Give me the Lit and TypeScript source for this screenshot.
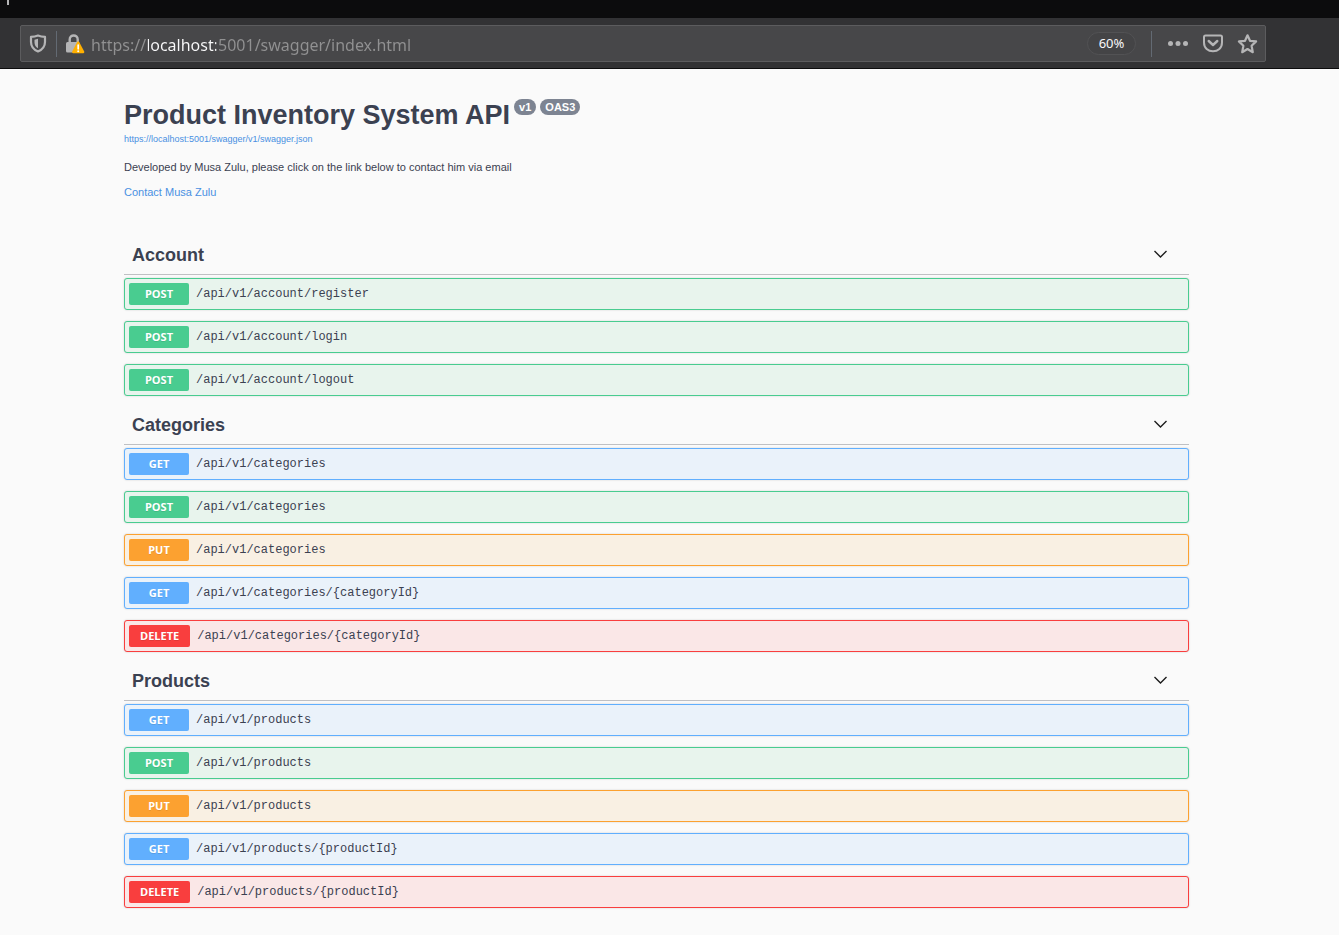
import { LitElement, html, css } from "lit";
import { customElement, property } from "lit/decorators.js";

type Method = "GET" | "POST" | "PUT" | "DELETE";

interface Operation {
  method: Method;
  path: string;
}

interface Tag {
  name: string;
  operations: Operation[];
}

const TAGS: Tag[] = [
  {
    name: "Account",
    operations: [
      { method: "POST", path: "/api/v1/account/register" },
      { method: "POST", path: "/api/v1/account/login" },
      { method: "POST", path: "/api/v1/account/logout" },
    ],
  },
  {
    name: "Categories",
    operations: [
      { method: "GET", path: "/api/v1/categories" },
      { method: "POST", path: "/api/v1/categories" },
      { method: "PUT", path: "/api/v1/categories" },
      { method: "GET", path: "/api/v1/categories/{categoryId}" },
      { method: "DELETE", path: "/api/v1/categories/{categoryId}" },
    ],
  },
  {
    name: "Products",
    operations: [
      { method: "GET", path: "/api/v1/products" },
      { method: "POST", path: "/api/v1/products" },
      { method: "PUT", path: "/api/v1/products" },
      { method: "GET", path: "/api/v1/products/{productId}" },
      { method: "DELETE", path: "/api/v1/products/{productId}" },
    ],
  },
];

@customElement("browser-bar")
export class BrowserBar extends LitElement {
  static styles = css`
    :host {
      display: block;
      font-family: "Noto Sans", "Open Sans", sans-serif;
    }
    .tabs {
      height: 18px;
      background: #0c0c0d;
    }
    .tab-edge {
      width: 2px;
      height: 5px;
      margin-left: 7px;
      background: #b5b5b6;
    }
    .toolbar {
      padding: 7px 73px 6px 20px;
      background: #323234;
      border-bottom: 1px solid #0c0c0d;
    }
    .field {
      display: flex;
      align-items: center;
      box-sizing: border-box;
      height: 37px;
      padding: 0 7px;
      background: #474749;
      border: 1px solid #5c5c5e;
      border-radius: 2px;
    }
    button {
      display: flex;
      flex: none;
      padding: 0;
      border: 0;
      background: none;
      color: #b5b5b6;
      font: inherit;
    }
    svg {
      display: block;
    }
    .line {
      flex: none;
      width: 1px;
      height: 26px;
      background: #636a73;
    }
    .shield {
      margin-right: 8px;
    }
    .lock {
      margin-left: 8px;
    }
    .address {
      flex: 1;
      min-width: 0;
      margin: 0 16px 0 6px;
      padding: 2px 0 0;
      border: 0;
      outline: 0;
      font: inherit;
      font-size: 16px;
      line-height: 24px;
      color: #919192;
      -webkit-text-fill-color: transparent;
      background: linear-gradient(
        90deg,
        #919192 57px,
        #f9f9fa 57px,
        #f9f9fa 125px,
        #919192 125px
      );
      -webkit-background-clip: text;
      background-clip: text;
    }
    .zoom {
      justify-content: center;
      box-sizing: border-box;
      width: 49px;
      margin-right: 15px;
      border: 1px solid #525254;
      border-radius: 12px;
      background: #444446;
      color: #f9f9fa;
      font-size: 13px;
      line-height: 21px;
    }
    .actions {
      display: flex;
      gap: 14px;
      margin-left: 15px;
    }
  `;

  render() {
    return html`
      <div class="tabs"><div class="tab-edge"></div></div>
      <div class="toolbar">
        <div class="field">
          <button class="shield" aria-label="Tracking protection">
            <svg width="20" height="20" viewBox="0 0 20 20" fill="none">
              <path
                d="M10 1.500 C8 2.300 5.600 2.800 3 2.900 V8 C3 12.600 5.600 15.600 10 17.500 C14.400 15.600 17 12.600 17 8 V2.900 C14.400 2.800 12 2.300 10 1.500Z"
                stroke="currentColor"
                stroke-width="2.200"
                stroke-linejoin="round"
              />
              <path d="M10 4.800 L6.500 5.800 V8.500 C6.500 11.200 7.800 13 10 14.300Z" fill="currentColor" />
            </svg>
          </button>
          <span class="line"></span>
          <button class="lock" aria-label="Connection is not secure">
            <svg width="20" height="20" viewBox="0 0 20 20" fill="none">
              <path
                d="M4.700 9 V5.500 C4.700 0.200 12.700 0.200 12.700 5.500 V9"
                stroke="currentColor"
                stroke-width="2.400"
              />
              <rect x="1" y="8" width="13.500" height="10.500" rx="1.500" fill="currentColor" />
              <path
                d="M12.200 8 Q13.200 6.500 14.200 8 L19.200 17.500 Q19.700 19.300 18.300 19.300 H8.100 Q6.700 19.300 7.200 17.500Z"
                fill="#ffb000"
              />
              <path d="M13.200 11 V14.800" stroke="#fff" stroke-width="1.700" stroke-linecap="round" />
              <circle cx="13.200" cy="17.200" r="1" fill="#fff" />
            </svg>
          </button>
          <input
            class="address"
            type="text"
            aria-label="Address"
            spellcheck="false"
            .value=${"https://localhost:5001/swagger/index.html"}
          />
          <button class="zoom" aria-label="Zoom level">60%</button>
          <span class="line"></span>
          <div class="actions">
            <button aria-label="Page actions">
              <svg width="22" height="22" viewBox="0 0 22 22" fill="currentColor">
                <circle cx="3.500" cy="10.500" r="2.500" />
                <circle cx="11" cy="10.500" r="2.500" />
                <circle cx="18.500" cy="10.500" r="2.500" />
              </svg>
            </button>
            <button aria-label="Save to Pocket">
              <svg width="20" height="22" viewBox="0 0 20 22" fill="none" stroke="currentColor">
                <path
                  d="M2.500 2.500 H17.500 Q19 2.500 19 4 V9.500 C19 15 15 18.300 10 18.300 C5 18.300 1 15 1 9.500 V4 Q1 2.500 2.500 2.500Z"
                  stroke-width="2"
                />
                <path
                  d="M5.700 8 L10 12 L14.300 8"
                  stroke-width="2.400"
                  stroke-linecap="round"
                  stroke-linejoin="round"
                />
              </svg>
            </button>
            <button aria-label="Bookmark this page">
              <svg width="21" height="22" viewBox="0 0 21 22" fill="none" stroke="currentColor">
                <path
                  d="M10.500 2.300 L13 7.800 L19.100 8.400 L14.600 12.700 L15.800 19.200 L10.500 16 L5.200 19.200 L6.400 12.700 L1.900 8.400 L8 7.800Z"
                  stroke-width="2.200"
                  stroke-linejoin="round"
                />
              </svg>
            </button>
          </div>
        </div>
      </div>
    `;
  }
}

@customElement("operation-row")
export class OperationRow extends LitElement {
  static styles = css`
    :host {
      display: block;
    }
    .row {
      display: flex;
      align-items: center;
      gap: 7px;
      box-sizing: border-box;
      width: 100%;
      height: 32px;
      padding: 0 4px;
      border: 1px solid var(--accent);
      border-radius: 3px;
      background: var(--tint);
      box-shadow: 0 0 2px rgba(0, 0, 0, 0.19);
      color: #3b4151;
      text-align: left;
    }
    .get {
      --accent: #61affe;
      --tint: #eaf2fa;
    }
    .post {
      --accent: #49cc90;
      --tint: #e8f4ed;
    }
    .put {
      --accent: #fca130;
      --tint: #f9f0e3;
    }
    .delete {
      --accent: #f93e3e;
      --tint: #fae7e7;
    }
    .method {
      box-sizing: border-box;
      min-width: 60px;
      padding: 0 11px;
      border-radius: 2px;
      background: var(--accent);
      color: #fff;
      font: 700 11px/22px "Open Sans", sans-serif;
      text-align: center;
      text-shadow: 0 1px 0 rgba(0, 0, 0, 0.1);
    }
    .path {
      font: 400 12px/16px "Courier New", "Liberation Mono", monospace;
    }
  `;

  @property({ attribute: false }) operation!: Operation;

  render() {
    const { method, path } = this.operation;
    return html`
      <button class="row ${method.toLowerCase()}">
        <span class="method">${method}</span>
        <span class="path">${path}</span>
      </button>
    `;
  }
}

@customElement("tag-section")
export class TagSection extends LitElement {
  static styles = css`
    :host {
      display: block;
    }
    .heading {
      margin: 0 0 3px;
      border-bottom: 1px solid #bfc0c3;
    }
    .toggle {
      display: flex;
      align-items: center;
      justify-content: space-between;
      width: 100%;
      padding: 9px 20px 7px 8px;
      border: 0;
      background: none;
      color: #3b4151;
      font: 700 18px/24px "Liberation Sans", Arial, sans-serif;
      text-align: left;
    }
    .operations {
      display: flex;
      flex-direction: column;
      gap: 11px;
    }
  `;

  @property({ attribute: false }) tag!: Tag;

  render() {
    return html`
      <h2 class="heading">
        <button class="toggle" aria-expanded="true">
          ${this.tag.name}
          <svg width="16" height="10" viewBox="0 0 16 10" fill="none">
            <path d="M1.500 1 L7.500 7 L13.500 1" stroke="#1c1c1c" stroke-width="1.400" />
          </svg>
        </button>
      </h2>
      <div class="operations">
        ${this.tag.operations.map(
          (operation) => html`<operation-row .operation=${operation}></operation-row>`
        )}
      </div>
    `;
  }
}

@customElement("app-root")
export class AppRoot extends LitElement {
  static styles = css`
    :host {
      display: block;
      min-height: 100vh;
      background: #fafafa;
      color: #3b4151;
      font-family: "Liberation Sans", Arial, sans-serif;
    }
    main {
      padding: 29px 150px 27px 124px;
    }
    .title-row {
      display: flex;
      align-items: flex-start;
      gap: 4px;
    }
    h1 {
      margin: 0;
      font-size: 27px;
      line-height: 34px;
    }
    .badge {
      margin-top: 1px;
      padding: 0 5px;
      border-radius: 8px;
      background: #7d8492;
      color: #fff;
      font-size: 11px;
      font-weight: 700;
      line-height: 16px;
    }
    a {
      color: #4990e2;
      text-decoration: none;
    }
    .spec,
    .contact {
      display: block;
      width: fit-content;
    }
    .spec {
      font-size: 9px;
      line-height: 14px;
    }
    .description {
      margin: 14px 0 11px;
      font-size: 11px;
      line-height: 14px;
    }
    .contact {
      font-size: 11px;
      line-height: 14px;
    }
    .tags {
      display: flex;
      flex-direction: column;
      gap: 8px;
      margin-top: 35px;
    }
  `;

  render() {
    return html`
      <browser-bar></browser-bar>
      <main>
        <header>
          <div class="title-row">
            <h1>Product Inventory System API</h1>
            <span class="badge">v1</span>
            <span class="badge">OAS3</span>
          </div>
          <a class="spec" href="/swagger/v1/swagger.json"
            >https://localhost:5001/swagger/v1/swagger.json</a
          >
          <p class="description">
            Developed by Musa Zulu, please click on the link below to contact him via email
          </p>
          <a class="contact" href="#contact">Contact Musa Zulu</a>
        </header>
        <div class="tags">
          ${TAGS.map((tag) => html`<tag-section .tag=${tag}></tag-section>`)}
        </div>
      </main>
    `;
  }
}
